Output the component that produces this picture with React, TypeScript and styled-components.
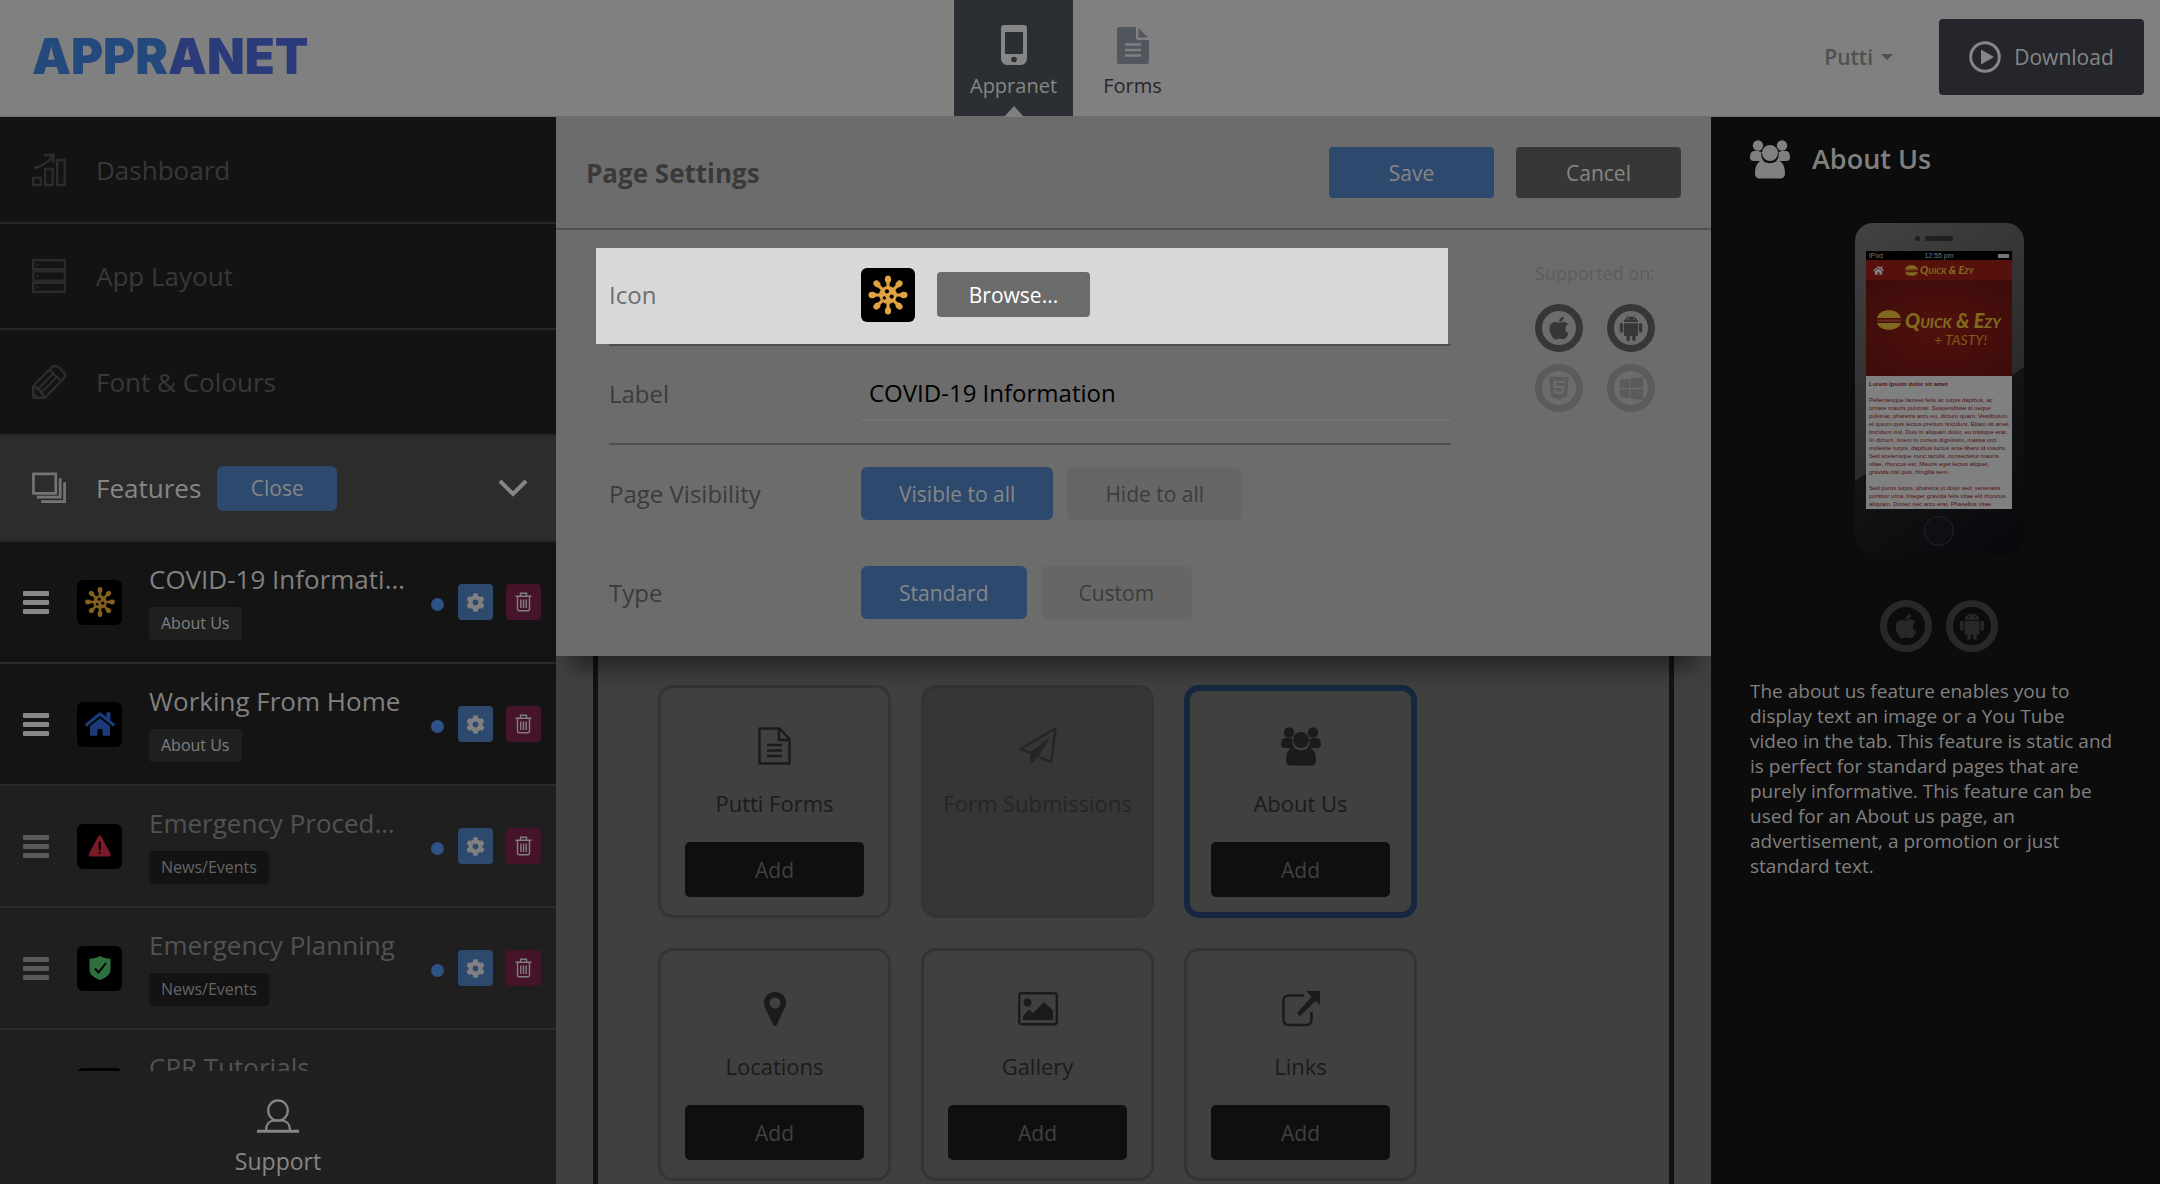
import React from "react";
import styled, { createGlobalStyle, css } from "styled-components";
import { FaApple, FaCog, FaHome, FaHtml5, FaWindows } from "react-icons/fa";
import { AiFillAndroid } from "react-icons/ai";
import { IoWarning } from "react-icons/io5";

const sans = '"Open Sans", "Noto Sans", sans-serif';
const blue = "#2e496e";
const grey = "#808080";

const GlobalStyle = createGlobalStyle`
  *, *::before, *::after { box-sizing: border-box; }
  body { margin: 0; font-family: ${sans}; background: #202020; overflow: hidden; }
  button, input { font-family: inherit; }
  h1, h2, p, ul { margin: 0; padding: 0; }
  ul { list-style: none; }
  svg { display: block; flex: none; }
`;

const Page = styled.div`
  display: flex;
  flex-direction: column;
  height: 100vh;
`;

/* ---------- Top bar ---------- */

const TopBar = styled.header`
  display: grid;
  grid-template-columns: 1fr auto 1fr;
  height: 117px;
  flex: none;
  background: ${grey};
  border-bottom: 1px solid #6e6e6e;
`;

const Logo = styled.a`
  align-self: center;
  padding: 0 0 2px 32px;
  font-family: Inter, "Open Sans", sans-serif;
  font-size: 49px;
  line-height: 56px;
  font-weight: 900;
  color: #24497c;
  text-decoration: none;
  span { color: #2b3b7a; }
`;

const Tabs = styled.nav`
  display: flex;
  margin-right: 14px;
`;

const Tab = styled.a<{ $active?: boolean }>`
  position: relative;
  display: flex;
  flex-direction: column;
  align-items: center;
  width: 119px;
  padding-top: 24px;
  gap: 6px;
  font-size: 20px;
  line-height: 28px;
  text-decoration: none;
  color: #26272d;
  ${(p) =>
    p.$active &&
    css`
      background: #2b2e33;
      color: #868686;
      &::after {
        content: "";
        position: absolute;
        bottom: -1px;
        left: 50%;
        margin-left: -10px;
        border: 10px solid transparent;
        border-top: 0;
        border-bottom: 11px solid ${grey};
      }
    `}
`;

const Account = styled.div`
  display: flex;
  align-items: center;
  justify-content: flex-end;
  gap: 46px;
  padding: 0 16px 2px 0;
`;

const AccountMenu = styled.button`
  display: flex;
  align-items: center;
  gap: 8px;
  padding: 0;
  border: 0;
  background: none;
  font-size: 21px;
  line-height: 28px;
  font-weight: 600;
  color: #505050;
`;

const Caret = styled.span`
  border: 6px solid transparent;
  border-bottom: 0;
  border-top-color: #505050;
`;

const DownloadButton = styled.button`
  display: flex;
  align-items: center;
  justify-content: center;
  gap: 13px;
  width: 205px;
  height: 76px;
  padding: 0;
  border: 0;
  border-radius: 4px;
  background: #25262b;
  color: #868686;
  font-size: 21px;
`;

/* ---------- Layout ---------- */

const Columns = styled.div`
  display: flex;
  flex: 1;
  min-height: 0;
`;

const Sidebar = styled.aside`
  display: flex;
  flex-direction: column;
  width: 556px;
  flex: none;
  background: #202020;
`;

const SideNav = styled.nav`
  padding-top: 1px;
  background: #131313;
`;

const NavItem = styled.a<{ $open?: boolean }>`
  display: flex;
  align-items: center;
  height: 106px;
  padding: 0 28px 0 32px;
  gap: 30px;
  border-bottom: 2px solid #282828;
  background: ${(p) => (p.$open ? "#2c2c2c" : "#131313")};
  color: ${(p) => (p.$open ? "#868686" : "#383838")};
  font-size: 26px;
  line-height: 36px;
  text-decoration: none;
  > svg:first-child { color: ${(p) => (p.$open ? "#747474" : "#2c2c2c")}; }
`;

const CloseButton = styled.button`
  width: 120px;
  height: 45px;
  margin: 0 auto 0 -14px;
  padding: 0;
  border: 0;
  border-radius: 6px;
  background: ${blue};
  color: #868686;
  font-size: 21px;
`;

const FeatureList = styled.ul`
  flex: 1;
  min-height: 0;
  overflow: hidden;
`;

const FeatureRow = styled.li<{ $dim?: boolean }>`
  display: flex;
  align-items: center;
  height: 122px;
  padding: 0 15px 0 23px;
  border-bottom: 2px solid #2b2b2b;
  background: ${(p) => (p.$dim ? "#1f1f1f" : "#141414")};
  color: ${(p) => (p.$dim ? "#525252" : "#808080")};
`;

const DragHandle = styled.span<{ $dim?: boolean }>`
  display: flex;
  flex-direction: column;
  gap: 4px;
  width: 26px;
  flex: none;
  margin-right: 28px;
  &::before, &::after, i { content: ""; height: 5px; border-radius: 1px; background: ${(p) => (p.$dim ? "#5a5a5a" : "#888")}; }
`;

const Tile = styled.span<{ $size: number }>`
  display: flex;
  align-items: center;
  justify-content: center;
  flex: none;
  width: ${(p) => p.$size}px;
  height: ${(p) => p.$size}px;
  border-radius: 6px;
  background: #000;
`;

const FeatureText = styled.div`
  display: flex;
  flex-direction: column;
  align-items: flex-start;
  gap: 11px;
  flex: 1;
  min-width: 0;
  margin: 0 24px 0 27px;
  padding-bottom: 2px;
`;

const FeatureTitle = styled.span`
  max-width: 100%;
  overflow: hidden;
  text-overflow: ellipsis;
  white-space: nowrap;
  font-size: 26px;
  line-height: 34px;
`;

const Tag = styled.span<{ $dim?: boolean }>`
  padding: 0 12px;
  border-radius: 4px;
  background: ${(p) => (p.$dim ? "#131313" : "#1f1f1f")};
  color: ${(p) => (p.$dim ? "#646464" : "#808080")};
  font-size: 16px;
  line-height: 33px;
`;

const Dot = styled.span`
  width: 13px;
  height: 13px;
  flex: none;
  margin: 4px 14px 0 0;
  border-radius: 50%;
  background: #2e5285;
`;

const SquareButton = styled.button<{ $danger?: boolean }>`
  display: flex;
  align-items: center;
  justify-content: center;
  width: 35px;
  height: 36px;
  flex: none;
  padding: 0;
  border: 0;
  border-radius: 4px;
  background: ${(p) => (p.$danger ? "#45132a" : blue)};
  color: ${grey};
  & + & { margin-left: 13px; }
`;

const Support = styled.a`
  display: flex;
  flex-direction: column;
  align-items: center;
  gap: 10px;
  height: 113px;
  padding-top: 28px;
  color: #868686;
  font-size: 23px;
  line-height: 36px;
  text-decoration: none;
`;

/* ---------- Settings panel ---------- */

const Main = styled.main`
  display: flex;
  flex-direction: column;
  flex: 1;
  min-width: 0;
  overflow: hidden;
  background: #404040;
`;

const Panel = styled.section`
  position: relative;
  flex: none;
  background: #6c6c6c;
  box-shadow: 0 28px 20px -16px rgba(0, 0, 0, 0.45);
`;

const PanelHeader = styled.div`
  display: flex;
  align-items: center;
  gap: 22px;
  height: 113px;
  padding: 0 30px;
  border-bottom: 2px solid #505050;
`;

const PanelTitle = styled.h1`
  flex: 1;
  font-size: 26px;
  line-height: 32px;
  font-weight: 700;
  color: #393939;
`;

const Action = styled.button<{ $primary?: boolean }>`
  width: 165px;
  height: 51px;
  padding: 0;
  border: 0;
  border-radius: 4px;
  background: ${(p) => (p.$primary ? blue : "#373737")};
  color: #868686;
  font-size: 21px;
`;

const PanelBody = styled.div`
  display: flex;
  padding: 17px 56px 13px 40px;
`;

const Fields = styled.div`
  flex: 1;
  min-width: 0;
`;

const Row = styled.div<{ $ruled?: boolean; $lit?: boolean }>`
  display: flex;
  align-items: center;
  height: 99px;
  margin-left: 13px;
  padding-bottom: 2px;
  ${(p) => p.$ruled && css`
    border-bottom: 2px solid #505050;
  `}
  ${(p) =>
    p.$lit &&
    css`
      position: relative;
      isolation: isolate;
      > span:first-child { color: #6e6e6e; }
      &::before {
        content: "";
        position: absolute;
        inset: 1px 3px 0 -13px;
        z-index: -1;
        background: #d8d8d8;
      }
    `}
`;

const RowLabel = styled.label`
  width: 252px;
  flex: none;
  font-size: 24px;
  line-height: 32px;
  color: #3b3b3b;
`;

const BrowseButton = styled.button`
  width: 153px;
  height: 45px;
  margin-left: 22px;
  padding: 0;
  border: 0;
  border-radius: 4px;
  background: #6b6b6b;
  color: #fff;
  font-size: 21px;
`;

const TextInput = styled.input`
  flex: 1;
  min-width: 0;
  height: 54px;
  padding: 0 8px;
  border: 0;
  border-bottom: 2px solid #737373;
  background: none;
  color: #000;
  font-size: 24px;
  outline: 0;
`;

const Choices = styled.div`
  display: flex;
  gap: 14px;
`;

const Choice = styled.button<{ $on?: boolean }>`
  height: 53px;
  padding: 0 38px;
  border: 0;
  border-radius: 6px;
  background: ${(p) => (p.$on ? blue : "#666")};
  color: ${(p) => (p.$on ? "#868686" : "#3c3c3c")};
  font-size: 21px;
`;

const Supported = styled.div`
  display: flex;
  flex-direction: column;
  align-items: center;
  gap: 17px;
  margin-left: 84px;
  padding-top: 13px;
  color: #5c5c5c;
  font-size: 18px;
  line-height: 27px;
`;

const Platforms = styled.div`
  display: grid;
  grid-template-columns: auto auto;
  gap: 12px 24px;
`;

const Ring = styled.span<{ $size: number; $color: string }>`
  display: flex;
  align-items: center;
  justify-content: center;
  width: ${(p) => p.$size}px;
  height: ${(p) => p.$size}px;
  border: 7px solid ${(p) => p.$color};
  border-radius: 50%;
  color: ${(p) => p.$color};
`;

/* ---------- Feature cards ---------- */

const Canvas = styled.div`
  flex: 1;
  min-height: 0;
  margin: 0 37px;
  padding: 29px 56px 0 60px;
  border: solid #131313;
  border-width: 0 5px;
`;

const Cards = styled.div`
  display: flex;
  flex-wrap: wrap;
  gap: 30px;
`;

const Card = styled.article<{ $state?: "selected" | "disabled" }>`
  display: flex;
  flex-direction: column;
  align-items: center;
  width: 233px;
  height: 233px;
  padding: ${(p) => (p.$state === "selected" ? "34px 21px 15px" : "37px 24px 18px")};
  border: ${(p) => (p.$state === "selected" ? "6px solid #16273f" : "3px solid #343434")};
  border-radius: 15px;
  background: ${(p) => (p.$state === "disabled" ? "#363636" : "none")};
  color: ${(p) => (p.$state === "disabled" ? "#252525" : "#1b1b1b")};
`;

const CardIcon = styled.span`
  display: flex;
  align-items: center;
  height: 42px;
`;

const CardLabel = styled.span`
  margin-top: 20px;
  font-size: 22px;
  line-height: 32px;
  white-space: nowrap;
`;

const AddButton = styled.button`
  width: 100%;
  height: 55px;
  margin-top: auto;
  padding: 0;
  border: 0;
  border-radius: 5px;
  background: #0f0f0f;
  color: #404040;
  font-size: 21px;
`;

/* ---------- Preview column ---------- */

const Preview = styled.aside`
  display: flex;
  flex-direction: column;
  align-items: center;
  width: 449px;
  flex: none;
  padding: 20px 32px 0 39px;
  background: #0c0c0c;
`;

const PreviewTitle = styled.h2`
  display: flex;
  align-items: center;
  gap: 22px;
  width: 100%;
  font-size: 27px;
  line-height: 44px;
  font-weight: 600;
  color: #808080;
`;

const Phone = styled.div`
  display: flex;
  flex-direction: column;
  align-items: center;
  width: 169px;
  height: 331px;
  margin-top: 42px;
  border-radius: 18px;
  background: linear-gradient(146deg, #424242, #2a2a2a 58%, #131415 58%, #06080b);
`;

const Speaker = styled.span`
  display: flex;
  gap: 5px;
  height: 5px;
  margin: 13px 10px 10px 0;
  &::before, &::after { content: ""; width: 5px; border-radius: 3px; background: #202020; }
  &::after { width: 28px; }
`;

const Screen = styled.div`
  display: flex;
  flex-direction: column;
  width: 146px;
  height: 258px;
  overflow: hidden;
  background: #808080;
`;

const StatusBar = styled.div`
  display: grid;
  grid-template-columns: 1fr auto 1fr;
  align-items: center;
  height: 9px;
  flex: none;
  padding: 0 3px;
  background: #000;
  color: #777;
  font: 7px/9px "Liberation Sans", Arial, sans-serif;
`;

const Battery = styled.span`
  justify-self: end;
  width: 11px;
  height: 4px;
  background: #777;
`;

const AppBar = styled.div`
  display: grid;
  grid-template-columns: 32px auto;
  justify-content: start;
  align-items: center;
  height: 20px;
  flex: none;
  padding-left: 7px;
  background: #56110d;
  color: #808080;
`;

const Hero = styled.div`
  display: flex;
  flex-direction: column;
  justify-content: center;
  height: 96px;
  flex: none;
  padding: 0 11px;
  background: radial-gradient(#50100d, #3c0c0a);
`;

const Brand = styled.span<{ $large?: boolean }>`
  display: flex;
  align-items: center;
  gap: ${(p) => (p.$large ? 4 : 2)}px;
  font-family: Lato, "Open Sans", sans-serif;
  font-style: italic;
  font-variant: small-caps;
  font-weight: 900;
  font-size: ${(p) => (p.$large ? 20 : 11)}px;
  line-height: 20px;
  white-space: nowrap;
  color: #80691f;
`;

const Tagline = styled.span`
  align-self: flex-end;
  margin-right: 14px;
  font: italic 14px/16px Lato, sans-serif;
  color: #80591a;
`;

const Copy = styled.div`
  padding: 4px 3px;
  font: 6px/8px "Liberation Sans", Arial, sans-serif;
  white-space: pre;
  color: #4e1012;
`;

const HomeButton = styled.span`
  width: 30px;
  height: 30px;
  margin-top: 7px;
  border: 1px solid #24262a;
  border-radius: 50%;
  background: #0d0f12;
`;

const PreviewPlatforms = styled.div`
  display: flex;
  gap: 14px;
  margin: 46px 0 27px;
`;

const Description = styled.p`
  align-self: flex-start;
  max-width: 365px;
  font-size: 19px;
  line-height: 25px;
  color: #808080;
`;

/* ---------- Icons ---------- */

const UsersIcon = ({ size }: { size: number }) => (
  <svg width={size} height={size} viewBox="0 0 40 40" fill="currentColor">
    <circle cx="8" cy="6.5" r="5.2" />
    <circle cx="32" cy="6.5" r="5.2" />
    <path d="M3.500 12h5c1.300.7 2 .9 3 .9-.7 3.500.2 6.700 2.300 9.100H4C1.500 22 0 21 0 18.500 0 15 1 12.500 3.500 12zM36.500 12h-5c-1.300.7-2 .9-3 .9.7 3.500-.2 6.700-2.300 9.100H36c2.500 0 4-1 4-3.500 0-3.500-1-6-3.500-6.500z" />
    <circle cx="20" cy="14" r="8" />
    <path d="M12.500 21.500c4.500 3.500 10.500 3.500 15 0 4.500.5 7.500 5 7.500 13 0 3.500-2 5-5 5H10c-3 0-5-1.500-5-5 0-8 3-12.500 7.500-13z" />
  </svg>
);

const VirusIcon = ({ size, color }: { size: number; color: string }) => (
  <svg width={size} height={size} viewBox="0 0 40 40">
    <g stroke={color} strokeWidth="3" fill={color}>
      {[0, 45, 90, 135, 180, 225, 270, 315].map((a) => (
        <g key={a} transform={`rotate(${a} 20 20)`}>
          <path d="M20 14V5" />
          <ellipse cx="20" cy="5" rx="3" ry="3.600" stroke="none" />
        </g>
      ))}
      <circle cx="20" cy="20" r="8.500" stroke="none" />
    </g>
    <circle cx="19" cy="16.500" r="2" />
    <circle cx="16.500" cy="22.800" r="1.600" />
    <circle cx="23.500" cy="21.500" r="2" />
  </svg>
);

const ShieldIcon = () => (
  <svg width="26" height="26" viewBox="0 0 26 26">
    <path d="M13 1c3.500 1.800 7 2.600 10.500 2.700V15c0 5-6 8.500-10.500 10C8.500 23.500 2.500 20 2.500 15V3.700C6 3.600 9.500 2.800 13 1z" fill="#2f6f3d" />
    <path d="M8 13.500l3.500 4L19 8" fill="none" stroke="#000" strokeWidth="2" />
  </svg>
);

const TrashIcon = () => (
  <svg width="17" height="20" viewBox="0 0 17 20" fill="none" stroke="currentColor" strokeWidth="1.400">
    <path d="M.5 4.200h16M5.500 4V1.200h6V4M2.500 4.500v12.300c0 1.200.8 2 2 2h8c1.200 0 2-.8 2-2V4.500M5.800 7.500v8.500M8.500 7.500v8.500M11.200 7.500v8.500" />
  </svg>
);

const MobileIcon = () => (
  <svg width="28" height="42" viewBox="0 0 28 42">
    <path d="M4 1h20c1.700 0 3 1.300 3 3v30c0 4-2.500 7-6 7H7c-3.500 0-6-3-6-7V4c0-1.700 1.300-3 3-3z" fill="#868686" />
    <path d="M5 8h18v22H5z" fill="#2b2e33" />
    <circle cx="14" cy="35.500" r="2.800" fill="#2b2e33" />
  </svg>
);

const FileSolidIcon = () => (
  <svg width="32" height="42" viewBox="0 0 32 42" fill="#51565f">
    <path d="M2 3h17v11c0 1 .7 2 2 2h11v22c0 1-.7 2-2 2H2c-1 0-2-1-2-2V5c0-1 1-2 2-2z" />
    <path d="M21.500 4L31 13.500h-9.500z" />
    <path d="M8 20.500h16M8 26h16M8 31.500h16" stroke={grey} strokeWidth="2.500" />
  </svg>
);

const PlayIcon = () => (
  <svg width="32" height="32" viewBox="0 0 32 32">
    <circle cx="16" cy="16" r="14.300" fill="none" stroke="currentColor" strokeWidth="3" />
    <path d="M12 8.500L25 16l-13 7.500z" fill="currentColor" />
  </svg>
);

const ChartIcon = () => (
  <svg width="34" height="34" viewBox="0 0 34 34" fill="none" stroke="currentColor" strokeWidth="2.400">
    <path d="M1.200 25h7.500v7H1.200zM13.200 16h7.500v16h-7.500zM25.200 7h7.500v25h-7.500zM2 15c8-1.500 14-5.500 19-12M12 2h9.500v8" />
  </svg>
);

const LayoutIcon = () => (
  <svg width="34" height="34" viewBox="0 0 34 34" fill="none" stroke="currentColor" strokeWidth="2.200">
    <path d="M1.200 1.200h31.600v9H1.200zM1.200 12.500h31.600v9H1.200zM1.200 23.800h31.600v9H1.200zM4.500 5.500h2M4.500 17h2M4.500 28.500h2" />
  </svg>
);

const PencilIcon = () => (
  <svg width="34" height="34" viewBox="0 0 34 34" fill="none" stroke="currentColor" strokeWidth="2.400" strokeLinejoin="round">
    <path d="M1.200 32.800V21L19 3c2.500-2.500 5.500-2.500 8-.5l4 4c2.500 2.500 2.500 5 .5 7L13 32.800zM17.500 4.500l12 12M1.500 21.500c4 1 8.500 5 10.500 11M4.500 25.500L21 9M8 28.500L25 12M1 28l5 5" />
  </svg>
);

const StackIcon = () => (
  <svg width="34" height="32" viewBox="0 0 35 32" fill="none" stroke="currentColor" strokeWidth="2.800">
    <path d="M1.500 1.500h23v20h-23zM29 6v19.500H5M33.500 10v20H9.500" />
  </svg>
);

const ChevronIcon = () => (
  <svg width="30" height="18" viewBox="0 0 30 18" fill="none" stroke="#868686" strokeWidth="4">
    <path d="M2 2l13 13L28 2" />
  </svg>
);

const SupportIcon = () => (
  <svg width="42" height="34" viewBox="0 0 42 34" fill="none" stroke="currentColor" strokeWidth="2.200">
    <ellipse cx="21" cy="11.500" rx="9.800" ry="10.200" />
    <path d="M0 32.200h42" strokeWidth="3" />
    <path d="M9 31c0-5 3-9 8-9.500h8c5 .5 8 4.500 8 9.500" />
  </svg>
);

const FormIcon = () => (
  <svg width="33" height="38" viewBox="0 0 33 38" fill="none" stroke="currentColor" strokeWidth="2.400" strokeLinejoin="round">
    <path d="M1.500 1.500h20L31.500 12v24.500h-30zM21 2v11h10M9 18h15M9 23.500h15M9 29h15" />
  </svg>
);

const PlaneIcon = () => (
  <svg width="38" height="38" viewBox="0 0 38 38" fill="none" stroke="currentColor" strokeWidth="2.400" strokeLinejoin="round">
    <path d="M11.500 25.500L1.500 22 36.500 1.500 32 35l-12-5" />
    <path d="M11.500 25.500L30 11.500 19 29.500l-7 7z" fill="currentColor" strokeWidth="1" />
  </svg>
);

const PinIcon = () => (
  <svg width="22" height="34" viewBox="0 0 22 34" fill="currentColor">
    <path fillRule="evenodd" d="M11 0c6 0 11 4.700 11 10.500 0 3-1 5-2 7L13 32.500c-1 2-3 2-4 0L2 17.500c-1-2-2-4-2-7C0 4.700 5 0 11 0zm0 5.500a5.500 5.500 0 100 11 5.500 5.500 0 000-11z" />
  </svg>
);

const GalleryIcon = () => (
  <svg width="40" height="34" viewBox="0 0 40 34">
    <rect x="1.200" y="1.200" width="37.600" height="31" rx="2.500" fill="none" stroke="currentColor" strokeWidth="2.400" />
    <path d="M5 28v-4l6-6.500 4 3.500L26 10l9 8.500V28z" fill="currentColor" />
    <circle cx="9.500" cy="10.500" r="4" fill="currentColor" />
  </svg>
);

const LinkIcon = () => (
  <svg width="38" height="36" viewBox="0 0 38 36">
    <path d="M22 4.500H7c-3.500 0-5.500 2-5.500 5.500v18.500c0 3.500 2 5.500 5.500 5.500h17c3.500 0 5.500-2 5.500-5.500V21" fill="none" stroke="currentColor" strokeWidth="2.600" />
    <path d="M24.500 0H38v14l-4.500-4-15.500 15-3-3 14.500-16z" fill="currentColor" />
  </svg>
);

const BurgerIcon = ({ size }: { size: number }) => (
  <svg width={size} height={size} viewBox="0 0 24 20" fill="#80691f">
    <path d="M0 8C2-2.500 22-2.500 24 8zM0 13h24c-2 9-22 9-24 0z" />
    <path d="M0 9.500h24v2H0z" fill="#6d3018" />
  </svg>
);

/* ---------- Data ---------- */

const features = [
  { title: "COVID-19 Information", tag: "About Us", icon: <VirusIcon size={32} color="#86601f" /> },
  { title: "Working From Home", tag: "About Us", icon: <FaHome size={30} color="#1b3a78" /> },
  { title: "Emergency Procedures", tag: "News/Events", dim: true, icon: <IoWarning size={28} color="#7a1b28" /> },
  { title: "Emergency Planning", tag: "News/Events", dim: true, icon: <ShieldIcon /> },
  { title: "CPR Tutorials", tag: "News/Events", dim: true, icon: null },
];

const cards: { label: string; icon: React.ReactNode; state?: "selected" | "disabled" }[] = [
  { label: "Putti Forms", icon: <FormIcon /> },
  { label: "Form Submissions", icon: <PlaneIcon />, state: "disabled" },
  { label: "About Us", icon: <UsersIcon size={40} />, state: "selected" },
  { label: "Locations", icon: <PinIcon /> },
  { label: "Gallery", icon: <GalleryIcon /> },
  { label: "Links", icon: <LinkIcon /> },
];

const loremLines = [
  "",
  "Pellentesque laoreet felis ac turpis dapibus, ac",
  "ornare mauris pulvinar. Suspendisse id neque",
  "pulvinar, pharetra arcu eu, dictum quam. Vestibulum",
  "et ipsum quis lectus pretium tincidunt. Etiam sit amet",
  "tincidunt nisl. Duis in aliquam dolor, eu tristique erat.",
  "In dictum, lorem in cursus dignissim, massa orci",
  "molestie turpis, dapibus luctus ante libero id mauris.",
  "Sed scelerisque nunc iaculis, consectetur mauris",
  "vitae, rhoncus est. Mauris eget lectus aliquet,",
  "gravida nisl quis, fringilla sem.",
  "",
  "Sed purus turpis, pharetra ut dolor sed, venenatis",
  "porttitor urna. Integer gravida felis vitae elit rhoncus",
  "aliquam. Donec nec arcu erat. Phasellus vitae",
];

export default function App() {
  return (
    <Page>
      <GlobalStyle />
      <TopBar>
        <Logo href="#">APPR<span>ANET</span></Logo>
        <Tabs>
          <Tab href="#" $active><MobileIcon />Appranet</Tab>
          <Tab href="#"><FileSolidIcon />Forms</Tab>
        </Tabs>
        <Account>
          <AccountMenu>Putti<Caret /></AccountMenu>
          <DownloadButton><PlayIcon />Download</DownloadButton>
        </Account>
      </TopBar>

      <Columns>
        <Sidebar>
          <SideNav>
            <NavItem href="#"><ChartIcon />Dashboard</NavItem>
            <NavItem href="#"><LayoutIcon />App Layout</NavItem>
            <NavItem href="#"><PencilIcon />Font &amp; Colours</NavItem>
            <NavItem as="div" $open>
              <StackIcon />Features
              <CloseButton>Close</CloseButton>
              <ChevronIcon />
            </NavItem>
          </SideNav>
          <FeatureList>
            {features.map((f) => (
              <FeatureRow key={f.title} $dim={f.dim}>
                <DragHandle $dim={f.dim}><i /></DragHandle>
                <Tile $size={45}>{f.icon}</Tile>
                <FeatureText>
                  <FeatureTitle>{f.title}</FeatureTitle>
                  <Tag $dim={f.dim}>{f.tag}</Tag>
                </FeatureText>
                <Dot />
                <SquareButton aria-label="Settings"><FaCog size={19} /></SquareButton>
                <SquareButton aria-label="Delete" $danger><TrashIcon /></SquareButton>
              </FeatureRow>
            ))}
          </FeatureList>
          <Support href="#"><SupportIcon />Support</Support>
        </Sidebar>

        <Main>
          <Panel>
            <PanelHeader>
              <PanelTitle>Page Settings</PanelTitle>
              <Action $primary>Save</Action>
              <Action>Cancel</Action>
            </PanelHeader>
            <PanelBody>
              <Fields>
                <Row $ruled $lit>
                  <RowLabel as="span">Icon</RowLabel>
                  <Tile $size={54}><VirusIcon size={42} color="#e0a243" /></Tile>
                  <BrowseButton>Browse...</BrowseButton>
                </Row>
                <Row $ruled>
                  <RowLabel htmlFor="label">Label</RowLabel>
                  <TextInput id="label" defaultValue="COVID-19 Information" />
                </Row>
                <Row>
                  <RowLabel as="span">Page Visibility</RowLabel>
                  <Choices>
                    <Choice $on>Visible to all</Choice>
                    <Choice>Hide to all</Choice>
                  </Choices>
                </Row>
                <Row>
                  <RowLabel as="span">Type</RowLabel>
                  <Choices>
                    <Choice $on>Standard</Choice>
                    <Choice>Custom</Choice>
                  </Choices>
                </Row>
              </Fields>
              <Supported>
                Supported on:
                <Platforms>
                  <Ring $size={48} $color="#373737"><FaApple size={26} /></Ring>
                  <Ring $size={48} $color="#373737"><AiFillAndroid size={30} /></Ring>
                  <Ring $size={48} $color="#5b5b5b"><FaHtml5 size={26} /></Ring>
                  <Ring $size={48} $color="#5b5b5b"><FaWindows size={27} /></Ring>
                </Platforms>
              </Supported>
            </PanelBody>
          </Panel>
          <Canvas>
            <Cards>
              {cards.map((c) => (
                <Card key={c.label} $state={c.state}>
                  <CardIcon>{c.icon}</CardIcon>
                  <CardLabel>{c.label}</CardLabel>
                  {c.state !== "disabled" && <AddButton>Add</AddButton>}
                </Card>
              ))}
            </Cards>
          </Canvas>
        </Main>

        <Preview>
          <PreviewTitle><UsersIcon size={40} />About Us</PreviewTitle>
          <Phone>
            <Speaker />
            <Screen>
              <StatusBar><span>iPod</span><span>12:55 pm</span><Battery /></StatusBar>
              <AppBar><FaHome size={11} /><Brand><BurgerIcon size={13} />Quick &amp; Ezy</Brand></AppBar>
              <Hero>
                <Brand $large><BurgerIcon size={24} />Quick &amp; Ezy</Brand>
                <Tagline>+ TASTY!</Tagline>
              </Hero>
              <Copy><b>Lorem ipsum dolor sit amet</b>{"\n" + loremLines.join("\n")}</Copy>
            </Screen>
            <HomeButton />
          </Phone>
          <PreviewPlatforms>
            <Ring $size={52} $color="#282828"><FaApple size={28} /></Ring>
            <Ring $size={52} $color="#282828"><AiFillAndroid size={32} /></Ring>
          </PreviewPlatforms>
          <Description>
            The about us feature enables you to display text an image or a You Tube video in the tab. This
            feature is static and is perfect for standard pages that are purely informative. This feature can be
            used for an About us page, an advertisement, a promotion or just standard text.
          </Description>
        </Preview>
      </Columns>
    </Page>
  );
}
